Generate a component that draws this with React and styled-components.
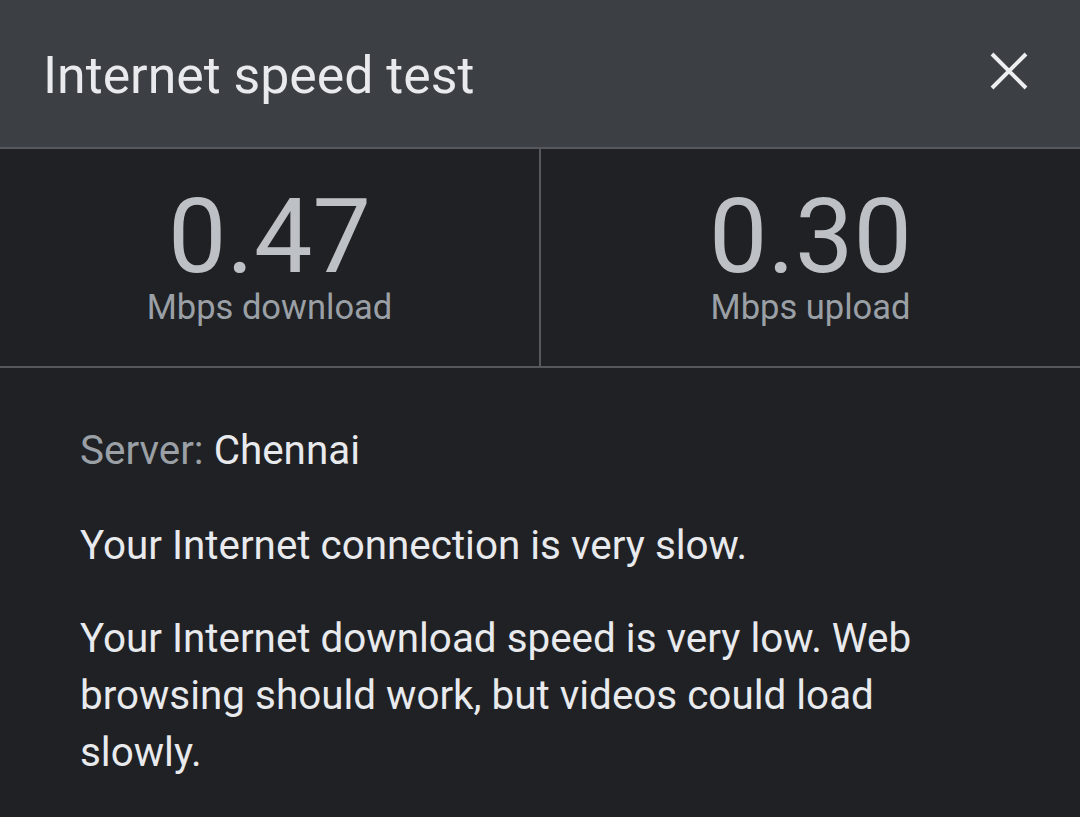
import React from "react";
import styled, { createGlobalStyle } from "styled-components";

const Global = createGlobalStyle`
  html, body { margin: 0; padding: 0; background: #202124; }
  body { font-family: Roboto, "Noto Sans", Arial, sans-serif; }
`;

const Page = styled.div`
  width: 1080px;
  height: 817px;
  background: #202124;
  overflow: hidden;
  display: flex;
  flex-direction: column;
`;

const Header = styled.header`
  height: 147px;
  background: #3c3f43;
  border-bottom: 2px solid #55585c;
  display: flex;
  align-items: center;
  justify-content: space-between;
  padding: 0 51px 0 43px;
  box-sizing: content-box;
  flex-shrink: 0;
`;

const Title = styled.h1`
  margin: 0;
  font-size: 51.8px;
  font-weight: 400;
  color: #e8eaed;
  margin-top: 4px;
`;

const CloseButton = styled.button`
  background: none;
  border: none;
  padding: 0;
  width: 40px;
  height: 40px;
  display: flex;
  align-items: center;
  justify-content: center;
  margin-top: -6px;
  cursor: pointer;
`;

const Stats = styled.div`
  display: grid;
  grid-template-columns: 539px 2px 1fr;
  height: 217px;
  border-bottom: 2px solid #55585c;
  flex-shrink: 0;
`;

const Divider = styled.div`
  background: #55585c;
`;

const Stat = styled.div`
  display: flex;
  flex-direction: column;
  align-items: center;
  padding-top: 36px;
`;

const Value = styled.div`
  font-size: 104px;
  line-height: 103px;
  color: #bdc1c6;
  font-weight: 400;
`;

const Unit = styled.div`
  font-size: 34.5px;
  line-height: 38px;
  color: #9aa0a6;
`;

const Body = styled.div`
  padding: 54px 140px 0 80px;
  color: #e8eaed;
  font-size: 40.4px;
  line-height: 57px;
`;

const Server = styled.p`
  margin: 0 0 38px 0;
`;

const Label = styled.span`
  color: #9aa0a6;
`;

const Para = styled.p`
  margin: 0 0 36px 0;
`;

export default function App() {
  return (
    <>
      <Global />
      <Page>
        <Header>
          <Title>Internet speed test</Title>
          <CloseButton aria-label="Close">
            <svg width="38" height="38" viewBox="0 0 38 38">
              <path d="M2 2 L36 36 M36 2 L2 36" stroke="#eceef0" strokeWidth="4" strokeLinecap="butt" />
            </svg>
          </CloseButton>
        </Header>
        <Stats>
          <Stat>
            <Value>0.47</Value>
            <Unit>Mbps download</Unit>
          </Stat>
          <Divider />
          <Stat>
            <Value>0.30</Value>
            <Unit>Mbps upload</Unit>
          </Stat>
        </Stats>
        <Body>
          <Server>
            <Label>Server: </Label>Chennai
          </Server>
          <Para>Your Internet connection is very slow.</Para>
          <Para>
            Your Internet download speed is very low. Web browsing should work, but videos could load slowly.
          </Para>
        </Body>
      </Page>
    </>
  );
}
